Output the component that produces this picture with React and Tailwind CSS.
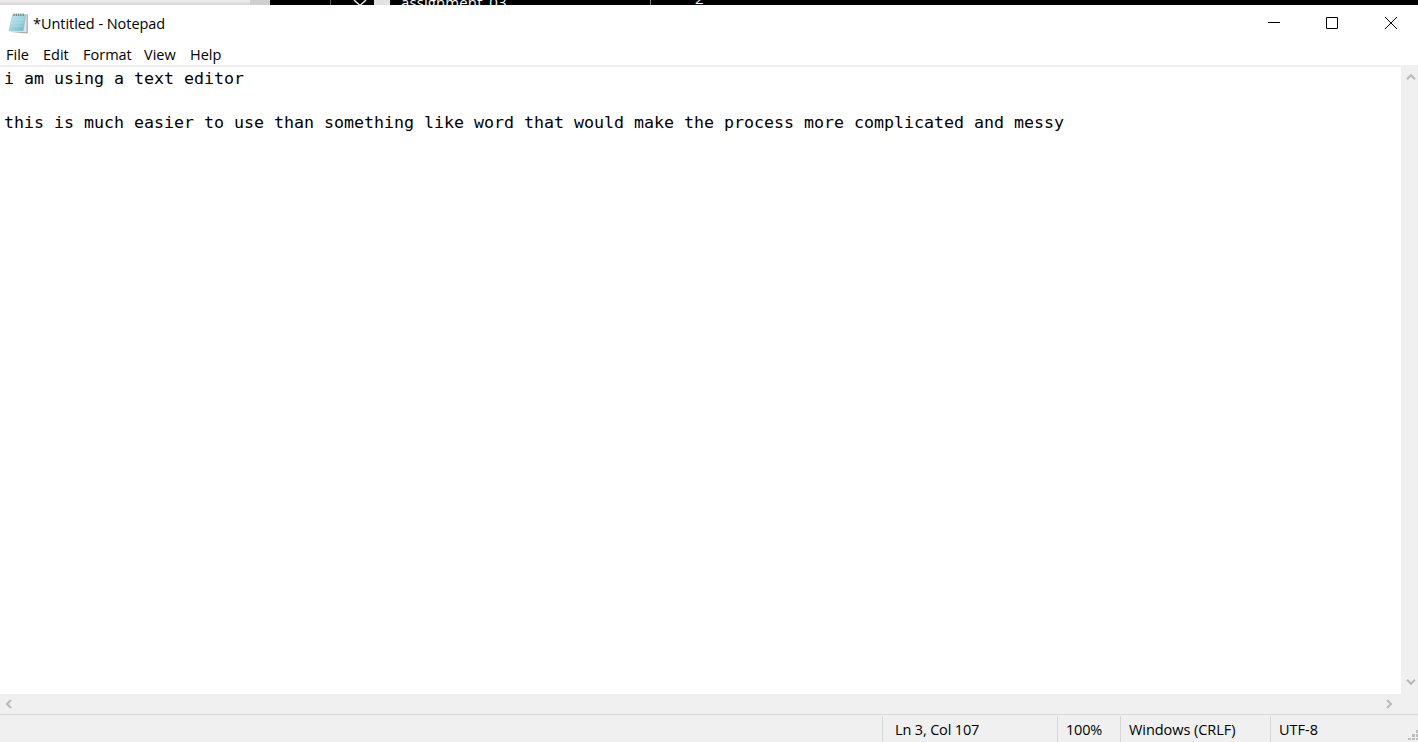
const UI = "font-['Open_Sans','Noto_Sans',sans-serif] text-[14.5px] leading-[20px] whitespace-pre";

function NotepadIcon() {
  return (
    <svg className="ml-[8px] h-[22px] w-[21px] shrink-0" viewBox="0 0 21 22">
      <defs>
        <linearGradient id="page" x1="0" y1="0" x2="1" y2="1">
          <stop offset="0" stopColor="#c4e8ee" />
          <stop offset="0.5" stopColor="#9dd4e0" />
          <stop offset="1" stopColor="#62b2c6" />
        </linearGradient>
      </defs>
      <path d="M5 1.5H19.7V20.3H15L4 19z" fill="#a39b84" />
      <path d="M5 1.5H18.8L18.6 19.2H3z" fill="#dfe6e6" />
      <path d="M4.6 1.8H18L15.2 17.8H1z" fill="url(#page)" stroke="#8abdc8" strokeWidth=".5" />
      <path d="M3.6 7H16M3.2 10H15.5M2.6 13H15" stroke="#bfe4ea" strokeWidth=".6" />
      <path d="M6 .5V3M8.3 .5V3M10.6 .5V3M12.9 .5V3M15.2 .5V3" stroke="#66747a" strokeWidth="1" />
    </svg>
  );
}

function Chevron({ d, className }) {
  return (
    <svg className={className} width="10" height="10" viewBox="0 0 10 10" fill="none" stroke="#b9b9b9" strokeWidth="2">
      <path d={d} />
    </svg>
  );
}

function BackgroundStrip() {
  return (
    <div className="flex h-[5px] shrink-0 overflow-hidden bg-black text-white">
      <div className="w-[250px] bg-gradient-to-b from-[#eeeeee] to-[#d6d6d6]" />
      <div className="w-[20px] bg-[#cfcfcf]" />
      <div className="w-[60px]" />
      <div className="w-px bg-[#4e5a60]" />
      <svg className="ml-[22px] h-[5px] w-[14px]" viewBox="0 0 14 5" fill="none" stroke="#eee" strokeWidth="1.4">
        <path d="M1 0L7 5.5L13 0" />
      </svg>
      <div className="ml-[7px] w-[16px] bg-[#e2e2e2]" />
      <div className="w-[260px] pl-[11px]">
        <div className="-mt-[8px] font-['Open_Sans',sans-serif] text-[15px] leading-[20px] tracking-[0.1px]">assignment_03</div>
      </div>
      <div className="w-px bg-[#6f8792]" />
      <div className="-mt-[12px] ml-[44px] font-['Open_Sans',sans-serif] text-[15px] leading-[20px]">2</div>
    </div>
  );
}

function TitleBar() {
  return (
    <header className="flex h-[37px] shrink-0 items-center">
      <NotepadIcon />
      <span className={`${UI} ml-[4px] tracking-[-0.05px]`}>*Untitled - Notepad</span>
      <svg className="mr-[20px] mb-[2px] ml-auto h-[14px] w-[131px]" viewBox="0 0 131 14" fill="none" stroke="#000" strokeWidth="1">
        <path d="M1 6.5H13M59.5 1.5H70.5V12.5H59.5zM118 1L130 13M130 1L118 13" />
      </svg>
    </header>
  );
}

const MENU = [
  ["File", "w-[37px]"],
  ["Edit", "w-[40px]"],
  ["Format", "w-[61px]"],
  ["View", "w-[46px]"],
  ["Help", "w-[40px]"],
];

function MenuBar() {
  return (
    <nav className="flex h-[25px] shrink-0 items-center border-b-2 border-[#eeeeee] pt-[2px] pl-[6px]">
      {MENU.map(([label, width]) => (
        <span key={label} className={`${UI} ${width}`}>{label}</span>
      ))}
    </nav>
  );
}

function Editor() {
  return (
    <div className="flex min-h-0 flex-1">
      <pre className="flex-1 pt-px pl-[4px] font-['DejaVu_Sans_Mono',monospace] text-[16.61px] leading-[22px] text-black">
        {"i am using a text editor\n\nthis is much easier to use than something like word that would make the process more complicated and messy"}
      </pre>
      <div className="-mt-[2px] flex w-[17px] flex-col items-center justify-between bg-[#f0f0f0] pt-[7px] pb-[7px] pl-[2px]">
        <Chevron d="M1 7.2L5 3.2L9 7.2" />
        <Chevron d="M1 2.8L5 6.8L9 2.8" />
      </div>
    </div>
  );
}

function StatusBar() {
  const cell = "flex items-center border-l border-[#d7d7d7] mt-px pt-px";
  return (
    <footer className="relative flex h-[28px] shrink-0 border-t border-[#d7d7d7] bg-[#f0f0f0]">
      <div className="w-[882px]" />
      <div className={`${cell} w-[175px] pl-[12px]`}><span className={`${UI} tracking-[-0.15px]`}>Ln 3, Col 107</span></div>
      <div className={`${cell} w-[63px] pl-[8px]`}><span className={`${UI} tracking-[-0.2px]`}>100%</span></div>
      <div className={`${cell} w-[150px] pl-[8px]`}><span className={`${UI} tracking-[-0.05px]`}>Windows (CRLF)</span></div>
      <div className={`${cell} flex-1 pl-[8px]`}><span className={UI}>UTF-8</span></div>
      <svg className="absolute right-0 bottom-0 h-[12px] w-[10px]" viewBox="0 0 10 12" fill="#bdbdbd">
        <path d="M8 0h2v3h-2zM4 4h3v3h-3zM8 4h2v3h-2zM0 8h3v2h-3zM4 8h3v2h-3zM8 8h2v2h-2z" />
      </svg>
    </footer>
  );
}

export default function App() {
  return (
    <div className="flex h-[742px] w-[1418px] flex-col overflow-hidden bg-white text-black">
      <BackgroundStrip />
      <TitleBar />
      <MenuBar />
      <Editor />
      <div className="flex h-[20px] shrink-0 items-center justify-between bg-[#f0f0f0] pr-[24px] pb-px pl-[4px]">
        <Chevron d="M7 1L3 5L7 9" />
        <Chevron d="M3 1L7 5L3 9" />
      </div>
      <StatusBar />
    </div>
  );
}
